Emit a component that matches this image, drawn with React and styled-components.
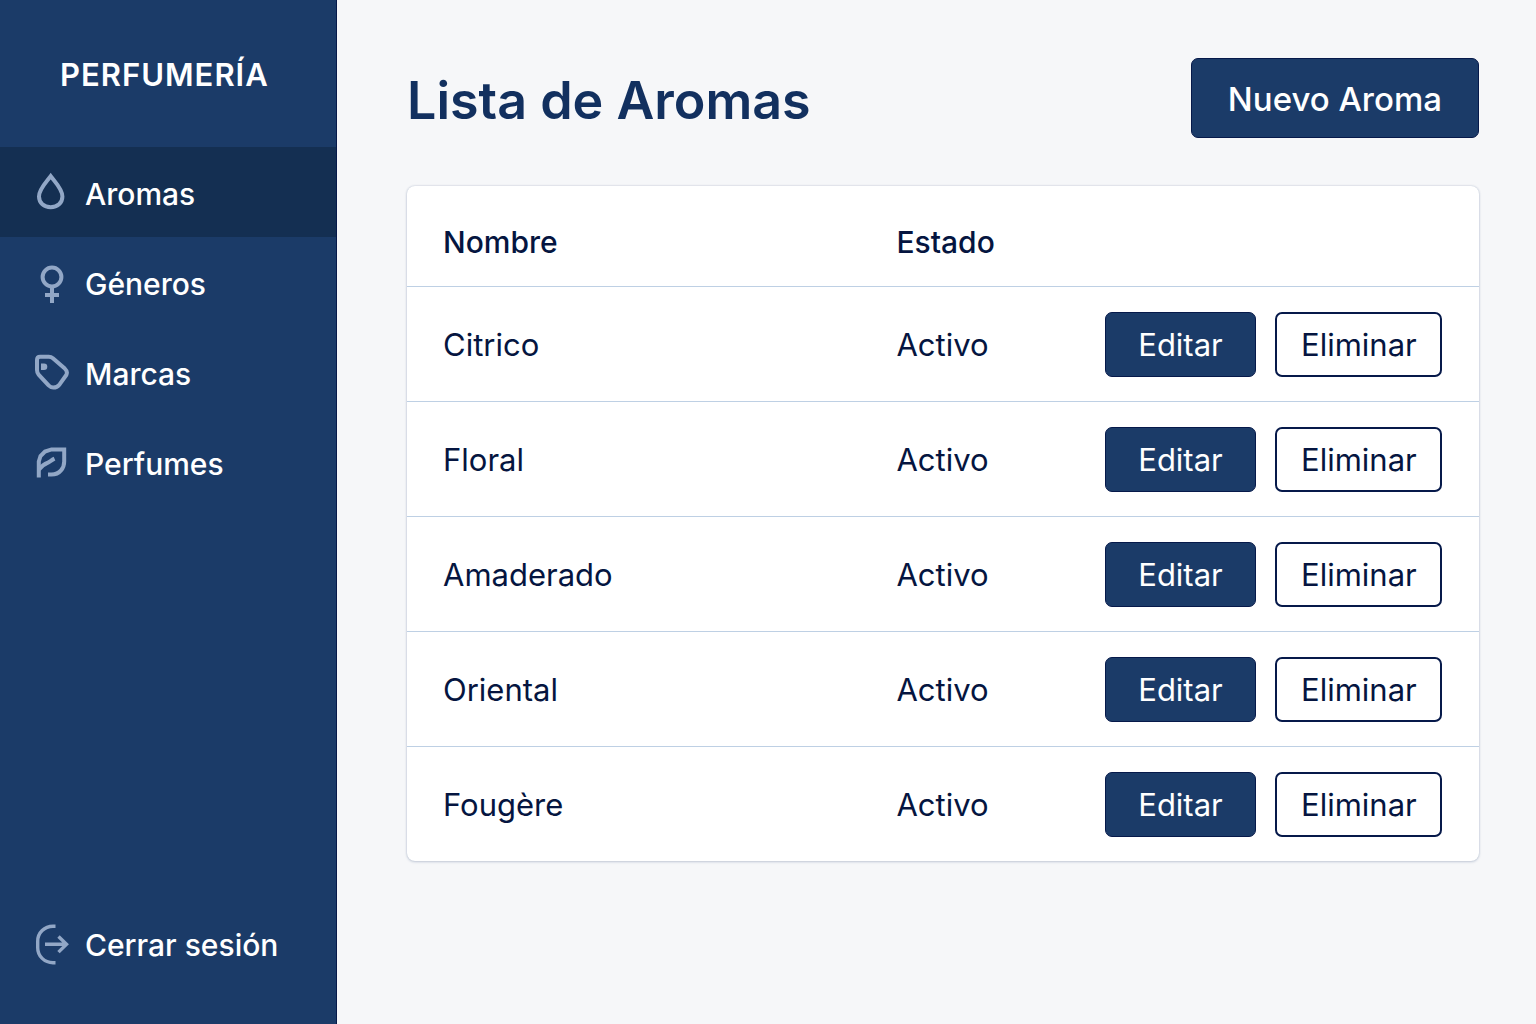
import React from 'react';
import styled, { createGlobalStyle, css } from 'styled-components';

const color = {
  navy: '#1b3b68',
  navyDark: '#142f52',
  edge: '#06194a',
  ink: '#051540',
  title: '#12305f',
  icon: '#92a7c6',
  page: '#f6f7f9',
  line: '#bed0e4',
};

const GlobalStyle = createGlobalStyle`
  *, *::before, *::after { box-sizing: border-box; }
  body {
    margin: 0;
    background: ${color.page};
    color: ${color.ink};
    font-family: Inter, 'Liberation Sans', sans-serif;
    font-size: 31px;
    line-height: 40px;
  }
`;

const Layout = styled.div`
  display: flex;
  min-height: 100vh;
`;

const Sidebar = styled.aside`
  display: flex;
  flex-direction: column;
  flex: 0 0 337px;
  padding-bottom: 36px;
  background: ${color.navy};
  border-right: 1px solid ${color.edge};
  color: #fff;
`;

const Brand = styled.div`
  padding: 55px 60px 52px;
  font-size: 31px;
  font-weight: 600;
  letter-spacing: 1px;
`;

const Nav = styled.nav`
  display: flex;
  flex-direction: column;
  flex: 1;
`;

const itemStyle = css`
  display: flex;
  align-items: center;
  gap: 15px;
  width: 100%;
  height: 90px;
  padding: 3px 34px 0;
  border: 0;
  background: ${(p) => (p.$active ? color.navyDark : 'transparent')};
  color: #fff;
  font: inherit;
  font-size: 30px;
  font-weight: 500;
  text-align: left;
  text-decoration: none;
  cursor: pointer;

  svg { flex: none; color: ${color.icon}; }
`;

const NavLink = styled.a`${itemStyle}`;
const LogoutButton = styled.button`${itemStyle}`;

const Main = styled.main`
  flex: 1;
  min-width: 0;
  padding: 58px 57px 58px 70px;
`;

const Header = styled.header`
  display: flex;
  align-items: center;
  justify-content: space-between;
  margin-bottom: 48px;
`;

const Title = styled.h1`
  margin: 0;
  padding-top: 6px;
  color: ${color.title};
  font-size: 52px;
  font-weight: 600;
  line-height: 64px;
`;

const Button = styled.button`
  height: ${(p) => (p.$large ? 80 : 65)}px;
  padding: ${(p) => (p.$large ? '2px 36px 0' : '1px 24px 0')};
  border: 2px solid ${color.edge};
  border-width: ${(p) => (p.$outline ? 2 : 1)}px;
  border-radius: 7px;
  background: ${(p) => (p.$outline ? '#fff' : color.navy)};
  color: ${(p) => (p.$outline ? color.ink : '#fff')};
  font: inherit;
  font-size: ${(p) => (p.$large ? 33 : 31)}px;
  font-weight: ${(p) => (p.$large ? 500 : 400)};
  white-space: nowrap;
  cursor: pointer;
`;

const Card = styled.section`
  background: #fff;
  border-radius: 8px;
  box-shadow: 0 0 2px rgba(30, 60, 110, 0.25), 0 1px 3px rgba(30, 60, 110, 0.18);
`;

const Table = styled.table`
  width: 100%;
  table-layout: fixed;
  border-collapse: separate;
  border-spacing: 0;

  tbody tr:last-child td { height: 114px; border-bottom: 0; }
`;

const Col = styled.col`
  width: ${(p) => p.$width};
`;

const HeadCell = styled.th`
  height: 101px;
  padding: 12px 36px 0;
  border-bottom: 1px solid ${color.line};
  font-size: 30px;
  font-weight: 500;
  text-align: left;
`;

const Cell = styled.td`
  height: 115px;
  padding: 2px 36px 0;
  border-bottom: 1px solid ${color.line};
`;

const ActionCell = styled(Cell)`
  padding: 0 37px 0 0;
`;

const Actions = styled.div`
  display: flex;
  justify-content: flex-end;
  gap: 19px;

  button:first-child { width: 151px; }
  button:last-child { width: 167px; }
`;

const Icon = ({ children, width = 4 }) => (
  <svg width="36" height="44" viewBox="0 0 36 44" fill="none" stroke="currentColor" strokeWidth={width} aria-hidden="true">
    {children}
  </svg>
);

const DropIcon = () => (
  <Icon>
    <path d="M16.7 4.2C13 9.5 5 16.8 5 24.6C5 31 10 35.3 16.7 35.3C23.4 35.3 28.4 31 28.4 24.6C28.4 16.8 20.4 9.5 16.7 4.2Z" />
  </Icon>
);

const VenusIcon = () => (
  <Icon>
    <circle cx="18" cy="15" r="9.4" />
    <path d="M18 24V41M11 33H25" />
  </Icon>
);

const TagIcon = () => (
  <Icon>
    <path d="M3 18V8Q3 4.8 6.2 4.8H14.8Q17.2 4.8 18.9 6.2L30.8 16.6Q34 19.6 32.3 23L25.6 32.4Q23 35.6 19.4 35.6Q16.8 35.6 14.6 33.4L4.6 22.6Q3 20.8 3 18Z" strokeLinejoin="round" />
    <path d="M7 11.4H10A3.3 3.3 0 0 1 10 18H7Z" fill="currentColor" stroke="none" />
  </Icon>
);

const LeafIcon = () => (
  <Icon>
    <path d="M4.8 35.5V19.5L6.5 14L11 9.5L17.5 7.4H30.2V19.5C30.2 23 29.4 25.8 27 28.4C24.3 31.6 21 32.6 17.5 32.6H14" />
    <path d="M5 27.5C8 23.5 11 21.8 14 20.6C16 19.6 17.5 18 20.5 16.6" />
  </Icon>
);

const LogoutIcon = () => (
  <Icon width={3.4}>
    <path d="M21.5 3.2H19C10.5 3.2 3.7 9.7 3.7 18.2V24.7C3.7 33.2 10.5 39.7 19 39.7H21.5" />
    <path d="M11 21.3H32.5M24.5 13.5L32.5 21.3L24.5 29.1" />
  </Icon>
);

const links = [
  { label: 'Aromas', icon: DropIcon, active: true },
  { label: 'Géneros', icon: VenusIcon },
  { label: 'Marcas', icon: TagIcon },
  { label: 'Perfumes', icon: LeafIcon },
];

const aromas = ['Citrico', 'Floral', 'Amaderado', 'Oriental', 'Fougère'];

export default function App() {
  return (
    <>
      <GlobalStyle />
      <Layout>
        <Sidebar>
          <Brand>PERFUMERÍA</Brand>
          <Nav>
            {links.map(({ label, icon: Glyph, active }) => (
              <NavLink key={label} href="#" $active={active} aria-current={active ? 'page' : undefined}>
                <Glyph />
                {label}
              </NavLink>
            ))}
          </Nav>
          <LogoutButton type="button">
            <LogoutIcon />
            Cerrar sesión
          </LogoutButton>
        </Sidebar>
        <Main>
          <Header>
            <Title>Lista de Aromas</Title>
            <Button type="button" $large>Nuevo Aroma</Button>
          </Header>
          <Card>
            <Table>
              <colgroup>
                <Col $width="42.3%" />
                <Col />
                <Col $width="375px" />
              </colgroup>
              <thead>
                <tr>
                  <HeadCell scope="col">Nombre</HeadCell>
                  <HeadCell scope="col">Estado</HeadCell>
                  <HeadCell as="td" />
                </tr>
              </thead>
              <tbody>
                {aromas.map((name) => (
                  <tr key={name}>
                    <Cell>{name}</Cell>
                    <Cell>Activo</Cell>
                    <ActionCell>
                      <Actions>
                        <Button type="button">Editar</Button>
                        <Button type="button" $outline>Eliminar</Button>
                      </Actions>
                    </ActionCell>
                  </tr>
                ))}
              </tbody>
            </Table>
          </Card>
        </Main>
      </Layout>
    </>
  );
}
